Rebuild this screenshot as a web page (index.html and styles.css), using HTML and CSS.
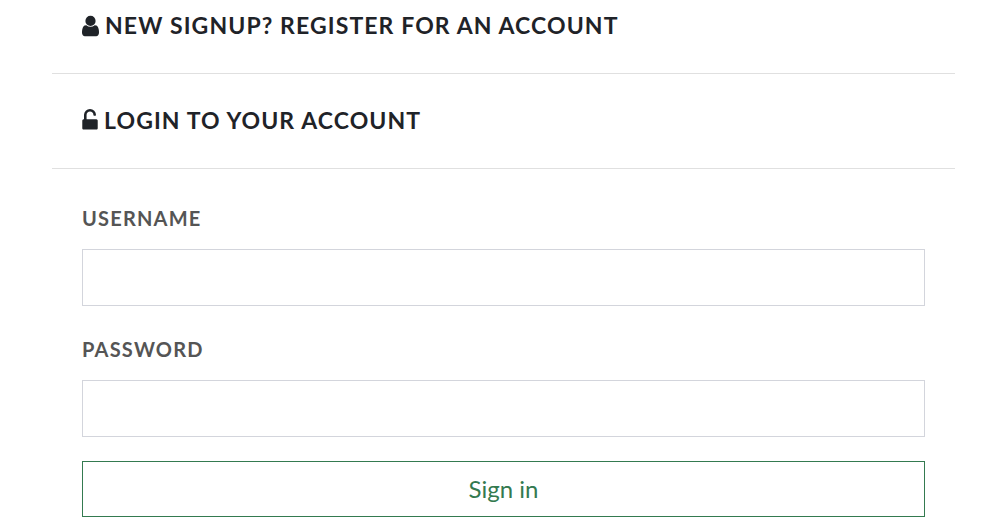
FILE: index.html
```html
<!DOCTYPE html>
<html lang="en">
<head>
<meta charset="utf-8">
<title>Login</title>
<link rel="stylesheet" href="styles.css">
</head>
<body>
<main class="panel">
  <section class="section section-signup">
    <h2 class="heading"><svg class="icon icon-user" viewBox="0 0 1280 1792" aria-hidden="true"><path d="M1280 1399q0 109-62.5 187t-150.5 78h-854q-88 0-150.5-78t-62.5-187q0-85 8.5-160.5t31.5-152 58.5-131 94-89 134.5-34.5q131 128 313 128t313-128q76 0 134.5 34.5t94 89 58.5 131 31.5 152 8.5 160.5zm-256-887q0 159-112.5 271.5t-271.5 112.5-271.5-112.5-112.5-271.5 112.5-271.5 271.5-112.5 271.5 112.5 112.5 271.5z"/></svg>NEW SIGNUP? REGISTER FOR AN ACCOUNT</h2>
  </section>
  <section class="section section-login">
    <h2 class="heading"><svg class="icon icon-lock" viewBox="0 0 1152 1792" aria-hidden="true"><path d="M1056 768q40 0 68 28t28 68v576q0 40-28 68t-68 28h-960q-40 0-68-28t-28-68v-576q0-40 28-68t68-28h32v-320q0-185 131.5-316.5t316.5-131.5 316.5 131.5 131.5 316.5q0 26-19 45t-45 19h-64q-26 0-45-19t-19-45q0-106-75-181t-181-75-181 75-75 181v320h736z"/></svg>LOGIN TO YOUR ACCOUNT</h2>
  </section>
  <form class="form">
    <label class="label" for="username">USERNAME</label>
    <input class="input" id="username" type="text">
    <label class="label" for="password">PASSWORD</label>
    <input class="input" id="password" type="password">
    <button class="button" type="button">Sign in</button>
  </form>
</main>
</body>
</html>
```
FILE: styles.css
```css
* { box-sizing: border-box; }
html, body { margin: 0; padding: 0; background: #fff; }
body { font-family: Lato, "Liberation Sans", sans-serif; height: 530px; overflow: hidden; }
.panel { margin: 0 52px; width: 903px; }
.section { border-bottom: 1px solid #e0e0e0; padding: 0 30px; }
.section-signup { height: 74px; padding-top: 11px; }
.section-login { height: 95px; padding-top: 32px; }
.heading {
  margin: 0;
  font-size: 23px;
  line-height: 29px;
  font-weight: 700;
  letter-spacing: 1.1px;
  color: #1f2328;
  display: flex;
  align-items: center;
}
.icon { fill: #1f2328; height: 24px; flex: none; }
.icon-user { width: 17px; margin-right: 6px; }
.icon-lock { width: 16px; margin-right: 6px; }
.form { padding: 37px 30px 0; display: flex; flex-direction: column; }
.label {
  font-size: 20px;
  line-height: 24px;
  font-weight: 700;
  letter-spacing: 1.2px;
  color: #555;
  margin-bottom: 19px;
}
.input {
  height: 57px;
  border: 1px solid #d3d5dc;
  background: #fff;
  margin-bottom: 31px;
  padding: 0 12px;
  outline: none;
  border-radius: 0;
}
.input + .label + .input { margin-bottom: 24px; }
.button {
  height: 56px;
  border: 1px solid #347a50;
  background: #fff;
  color: #347a50;
  font-family: Lato, "Liberation Sans", sans-serif;
  font-size: 24px;
  border-radius: 0;
  padding: 0 0 2px;
}
```
